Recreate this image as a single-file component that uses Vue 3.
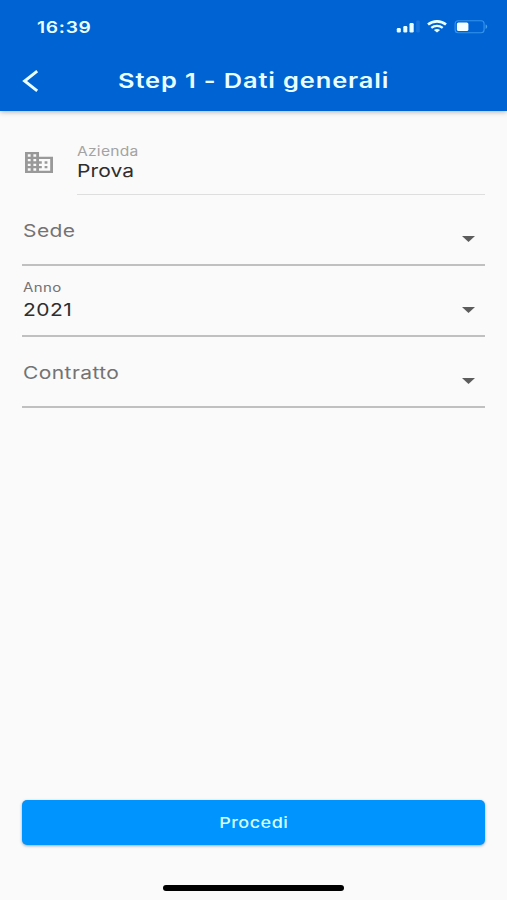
<script setup>
const fields = [
  { label: 'Sede', value: '' },
  { label: 'Anno', value: '2021' },
  { label: 'Contratto', value: '' },
]
</script>

<template>
  <div class="screen">
    <header class="header">
      <div class="status">
        <span class="time wide">16:39</span>
        <div class="indicators">
          <svg class="signal" width="24" height="13" viewBox="0 0 24 13">
            <rect x="0.8" y="8" width="4" height="4.4" rx="1.2" fill="#e9ffff" />
            <rect x="7.3" y="6" width="4" height="6.4" rx="1.2" fill="#e9ffff" />
            <rect x="13.5" y="3" width="4.2" height="9.4" rx="1.2" fill="#e9ffff" />
            <rect x="20.2" y="0.5" width="3.6" height="11.9" rx="1.2" fill="#1673dc" />
          </svg>
          <svg class="wifi" width="20" height="13" viewBox="0 0 20 13" fill="none" stroke="#e9ffff">
            <path d="M1 4.6C6 0.3 14 0.3 19 4.6" stroke-width="2.6" />
            <path d="M4.3 7.8C7.5 5.1 12.5 5.1 15.7 7.8" stroke-width="2.3" />
            <path d="M10 12.6L6.9 10C8.6 8.6 11.4 8.6 13.1 10Z" fill="#e9ffff" stroke="none" />
          </svg>
          <svg class="battery" width="34" height="14" viewBox="0 0 34 14">
            <rect x="1.1" y="0.8" width="29" height="11.9" rx="3" fill="none" stroke="#3594ec" stroke-width="1.1" />
            <rect x="2.9" y="2.4" width="11.5" height="8.7" rx="1.6" fill="#f4ffff" />
            <path d="M31.6 4.6C33.7 5.2 33.7 8.3 31.6 8.9Z" fill="#47a2f0" />
          </svg>
        </div>
      </div>
      <div class="toolbar">
        <svg class="back" width="18" height="24" viewBox="0 0 18 24" fill="none" stroke="#e9ffff" stroke-width="2.9">
          <path d="M15.2 2.2L2.6 12L15.2 21.8" />
        </svg>
        <h1 class="title wide">Step 1 - Dati generali</h1>
      </div>
    </header>

    <main class="form">
      <div class="company">
        <svg class="building" width="28" height="21" viewBox="2 3 20 18" preserveAspectRatio="none" fill="#999">
          <path d="M12 7V3H2v18h20V7H12zM6 19H4v-2h2v2zm0-4H4v-2h2v2zm0-4H4V9h2v2zm0-4H4V5h2v2zm4 12H8v-2h2v2zm0-4H8v-2h2v2zm0-4H8V9h2v2zm0-4H8V5h2v2zm10 12h-8v-2h2v-2h-2v-2h2v-2h-2V9h8v10zm-2-8h-2v2h2v-2zm0 4h-2v2h2v-2z" />
        </svg>
        <div class="company-text">
          <span class="company-label wide">Azienda</span>
          <span class="company-value wide">Prova</span>
        </div>
      </div>

      <div v-for="field in fields" :key="field.label" class="field" :class="{ filled: field.value }">
        <div class="field-text">
          <span class="label wide">{{ field.label }}</span>
          <span v-if="field.value" class="value wide">{{ field.value }}</span>
        </div>
        <svg class="caret" width="13" height="6" viewBox="0 0 13 6">
          <path d="M0 0H13L6.5 6Z" fill="#5c5c5c" />
        </svg>
      </div>
    </main>

    <footer class="footer">
      <button class="proceed" type="button"><span class="wide">Procedi</span></button>
      <div class="home"></div>
    </footer>
  </div>
</template>

<style>
body {
  margin: 0;
  background: #fafafa;
}
</style>

<style scoped>
.screen {
  display: flex;
  flex-direction: column;
  box-sizing: border-box;
  width: 100%;
  height: 900px;
  background: #fafafa;
  font-family: Inter, "Liberation Sans", sans-serif;
}
.wide {
  display: block;
  width: max-content;
  white-space: nowrap;
  transform: scaleX(1.2);
  transform-origin: left center;
}
.header {
  height: 111px;
  background: #0063d3;
  color: #e9ffff;
  box-shadow: 0 1px 5px rgba(0, 0, 0, 0.3);
}
.status {
  display: flex;
  justify-content: space-between;
  align-items: center;
  height: 53px;
  padding: 0 19px 0 36.5px;
}
.time {
  font-size: 16px;
  font-weight: 600;
  letter-spacing: 0.6px;
}
.indicators {
  display: flex;
  align-items: center;
}
.signal {
  margin-right: 7px;
}
.wifi {
  margin-right: 7px;
}
.toolbar {
  display: flex;
  align-items: center;
  height: 55px;
  padding-left: 22px;
}
.title {
  margin: 1px 0 0 77.5px;
  font-size: 20.5px;
  line-height: 26px;
  font-weight: 600;
  letter-spacing: 0.7px;
  transform: scaleX(1.24);
}
.form {
  flex: 1;
  padding: 0 22px;
}
.company {
  display: flex;
  height: 84px;
}
.building {
  margin: 41px 24px 0 2.5px;
}
.company-text {
  flex: 1;
  box-sizing: border-box;
  padding-top: 31.5px;
  border-bottom: 1px solid #dedede;
}
.company-label {
  font-size: 13px;
  line-height: 16px;
  letter-spacing: 0.2px;
  color: #a3a3a3;
}
.company-value {
  margin-top: 1.5px;
  font-size: 17.5px;
  line-height: 22px;
  letter-spacing: 0.1px;
  color: #2e2e2e;
}
.field {
  display: flex;
  justify-content: space-between;
  box-sizing: border-box;
  height: 71px;
  border-bottom: 2px solid #c0c0c0;
}
.field-text {
  padding: 24.5px 0 0 0.5px;
}
.label {
  font-size: 17.5px;
  line-height: 22px;
  letter-spacing: 0.35px;
  color: #737373;
}
.filled .field-text {
  padding-top: 13.5px;
}
.filled .label {
  font-size: 12.5px;
  line-height: 16px;
}
.value {
  margin-top: 3.5px;
  font-size: 17.5px;
  line-height: 22px;
  letter-spacing: 0.4px;
  color: #2e2e2e;
}
.caret {
  margin: 41px 10px 0 0;
}
.footer {
  display: flex;
  flex-direction: column;
  align-items: center;
  padding: 0 22px 9px;
}
.proceed {
  display: flex;
  justify-content: center;
  align-items: center;
  width: 100%;
  height: 45px;
  padding: 0;
  border: 0;
  border-radius: 5px;
  background: #0094ff;
  box-shadow: 0 1px 3px rgba(0, 50, 90, 0.4);
  color: #d4ffff;
  font: 500 15px Inter, "Liberation Sans", sans-serif;
}
.proceed .wide {
  transform-origin: center;
  letter-spacing: 0.4px;
}
.home {
  width: 181px;
  height: 6px;
  margin-top: 40px;
  border-radius: 3px;
  background: #000;
}
</style>
